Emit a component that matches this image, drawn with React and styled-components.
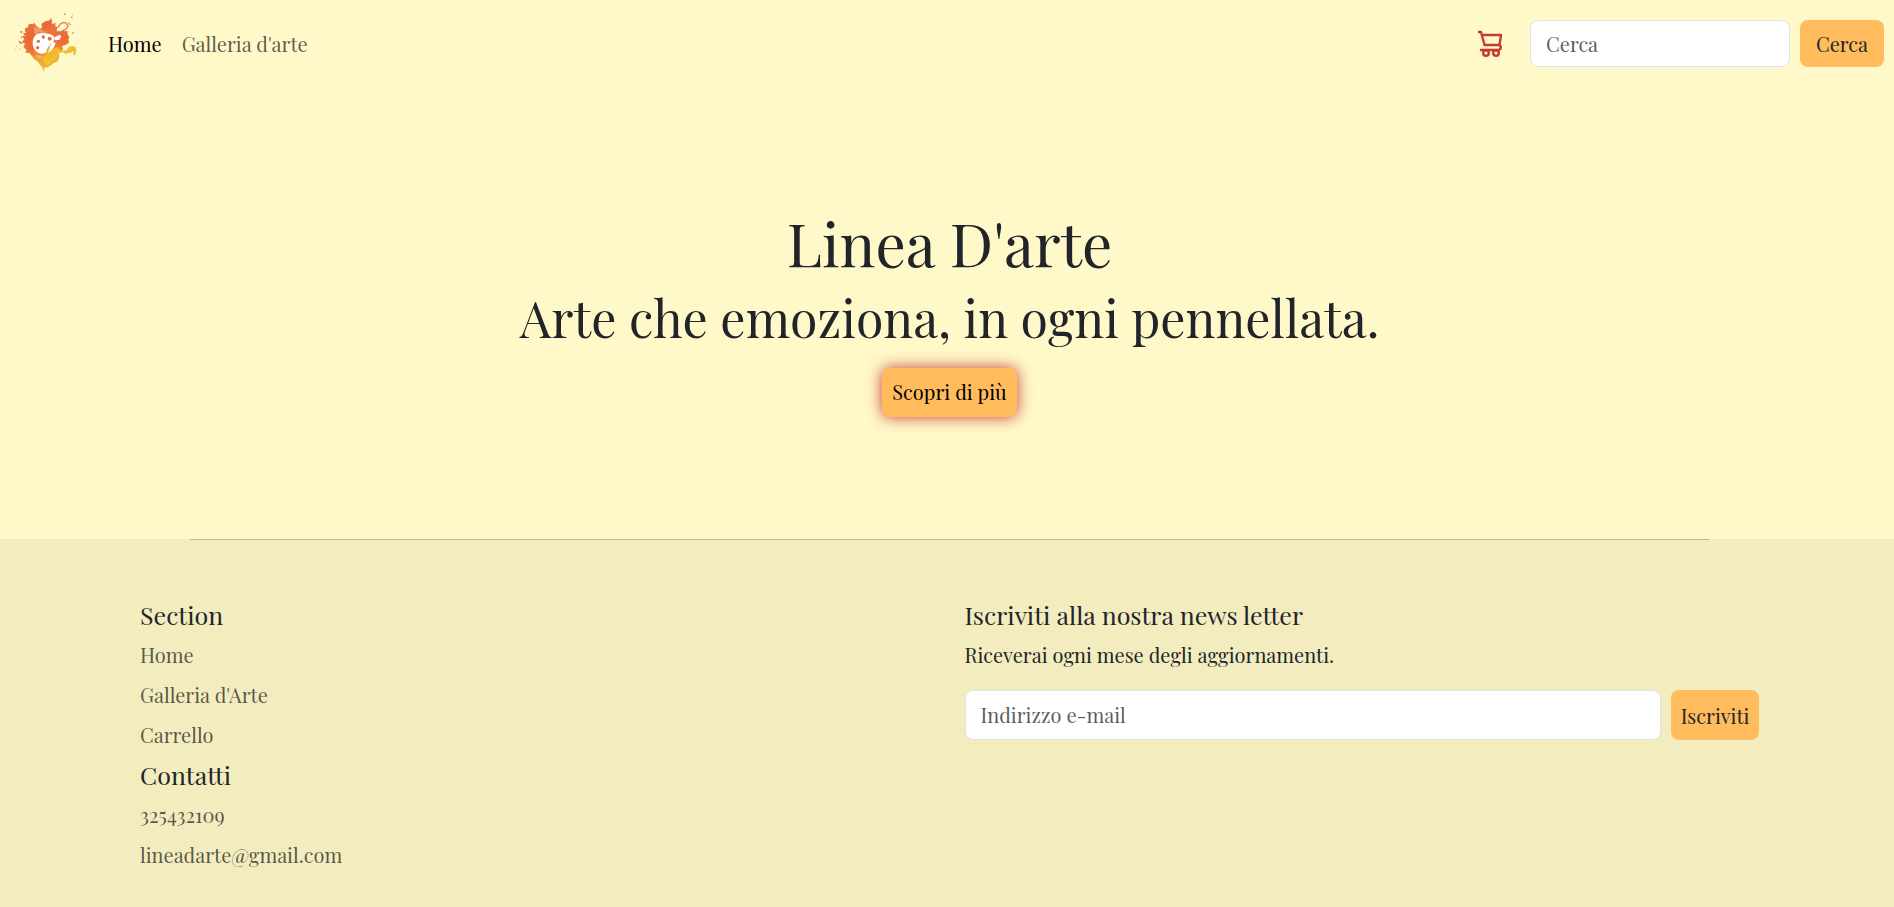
import React from "react";
import styled, { createGlobalStyle } from "styled-components";

const GlobalStyle = createGlobalStyle`
  *, *::before, *::after { box-sizing: border-box; }
  body {
    margin: 0;
    background: #fff8c9;
    color: #212529;
    font-family: "Playfair Display", "Liberation Serif", serif;
    font-size: 20px;
    line-height: 30px;
  }
`;

const Page = styled.div`
  min-height: 100vh;
  display: flex;
  flex-direction: column;
`;

const Navbar = styled.header`
  display: flex;
  align-items: center;
  padding: 10px 10px 10px 12px;
`;

const Brand = styled.a`
  display: block;
  width: 66px;
  height: 66px;
  margin-right: 30px;
`;

const Logo = styled.svg`
  display: block;
  width: 66px;
  height: 66px;
`;

const NavLinks = styled.nav`
  display: flex;
  gap: 20px;
  padding-top: 2px;
  margin-right: auto;
`;

const TextLink = styled.a`
  color: ${(p) => (p.$active ? "#000" : "rgba(0, 0, 0, 0.65)")};
  text-decoration: none;
`;

const CartLink = styled.a`
  display: block;
  padding-top: 2px;
  margin-right: 28px;
  line-height: 0;
`;

const Form = styled.form`
  display: flex;
  gap: 10px;
  height: ${(p) => p.$height};
`;

const Field = styled.input`
  min-width: 0;
  width: ${(p) => p.$width || "auto"};
  flex: ${(p) => (p.$width ? "none" : "1")};
  padding: ${(p) => (p.$width ? "2px 15px 0" : "0 15px")};
  border: 1px solid #dee2e6;
  border-radius: 8px;
  background: #fff;
  color: #212529;
  font: inherit;
  &::placeholder {
    color: rgba(33, 37, 41, 0.75);
    opacity: 1;
  }
`;

const Button = styled.button`
  width: ${(p) => p.$width};
  padding: 1px 0 0;
  border: 0;
  border-radius: 8px;
  background: #ffbb5c;
  color: #212529;
  font: inherit;
  white-space: nowrap;
  cursor: pointer;
`;

const Hero = styled.main`
  display: flex;
  flex-direction: column;
  align-items: center;
  padding: 120px 0 122px 5px;
  text-align: center;
`;

const Title = styled.h1`
  margin: 0 0 10px;
  font-size: 60px;
  line-height: 72px;
  font-weight: 400;
`;

const Tagline = styled.p`
  margin: 0 0 20px;
  font-size: 50px;
  line-height: 60px;
`;

const HeroButton = styled.a`
  padding: 9px 10px 10px;
  border-radius: 8px;
  background: #ffbb5c;
  box-shadow: 0 0 15px #c63d2f;
  color: #000;
  text-decoration: none;
`;

const Footer = styled.footer`
  flex: 1;
  background: #f2ecbf;
`;

const Divider = styled.hr`
  height: 1px;
  margin: 0 185px 0 190px;
  border: 0;
  background: #c0b797;
`;

const FooterGrid = styled.div`
  display: grid;
  grid-template-columns: 1fr 1fr;
  gap: 30px;
  padding: 55px 135px 30px 140px;
`;

const FooterTitle = styled.h2`
  margin: 0;
  font-size: 25px;
  line-height: 40px;
  font-weight: 400;
`;

const LinkList = styled.ul`
  margin: 0;
  padding: 0;
  list-style: none;
  line-height: 40px;
`;

const Note = styled.p`
  margin: 0 0 15px;
  line-height: 40px;
`;

function BrandLogo() {
  return (
    <Logo viewBox="36 30 198 198" aria-hidden="true">
      <defs>
        <linearGradient id="splash" gradientUnits="userSpaceOnUse" x1="125" y1="60" x2="150" y2="205">
          <stop offset="0" stopColor="#ec6f3b" />
          <stop offset="0.55" stopColor="#ec7338" />
          <stop offset="0.72" stopColor="#ee9a32" />
          <stop offset="1" stopColor="#efbf32" />
        </linearGradient>
      </defs>
      <path
        fill="url(#splash)"
        d="M76 84L86 81L83 75L92 71L97 73L104 69L108 77L121 86L126 82L124 71L136 64L149 61L153 53L156 62L155 71L168 70L165 78L172 81L170 93L178 94L190 93L204 94L202 103L208 110L205 119L208 127L198 134L186 139L190 148L183 154L176 158L178 172L171 185L160 190L151 197L141 203L135 202L130 216L127 203L119 193L112 184L103 178L96 169L88 159L76 158L79 149L70 141L75 132L66 126L73 117L66 109L75 107L69 100L79 98L74 92Z"
      />
      <path fill="#ecc033" d="M176 149l12 3 12-1 6-11 12-2 9 4 2 10-4 14-5-1 0-13-7 6-9 1-6 4-8-6-16 2z" />
      <path fill="#e9572f" opacity="0.25" d="M78 99l20-12 8 17-8 22 1 26 14 18-17-4-9-14-8-16zM128 75l24-14 2 14-18 10zM178 100l24 2-2 24-20 6-8-12z" />
      <path fill="#ffe0b8" opacity="0.35" d="M101 82l15 1 18 12 9-2-6 6-20-2-12 10zM106 164l24 4-8 8-10-2z" />
      <path fill="#f5ca2a" opacity="0.7" d="M139 158l16-8 16-10 9 10-6 10-2 15-15 8-7 10-14 0-8-16z" />
      <path fill="#efb52e" opacity="0.6" d="M151 159l12 10-15 12-8-5z" />
      <path fill="#fff8c9" d="M173 90l5-8 9-5 10-2 6 4-7 7-12 6z" />
      <path fill="none" stroke="#ea7848" strokeWidth="4" strokeLinecap="round" d="M174 82l8-11 9-4 8 2 4 9M204 80l-7 8-12 5" />
      <path fill="#fff" d="M98 130c0-19 11-31 28-31 14 0 27 2 35 10 6 6 2 14-5 20-9 8-15 16-16 27-15 13-42 0-42-26z" />
      <path fill="#fff" d="M143 158c1-13 8-24 16-33l8 4c-4 15-13 25-24 29zM163 118l3-8 14-6 4 6-6 9-9 2z" />
      <path fill="#ecb32e" d="M138 160c-1-8 3-15 9-20l3 4-7 14z" />
      <g fill="#ea693b">
        <circle cx="130" cy="111" r="5" />
        <circle cx="149" cy="116" r="6" />
        <circle cx="115" cy="124" r="5" />
        <circle cx="113" cy="143" r="5" />
      </g>
      <g fill="#e77a4a">
        <path d="M193 39l4 2-1 4-4-1zM205 67l4 2 1 5-4 0zM217 42l3 2-2 3zM214 49l4 3-1 3-4-2zM211 72l3 1-2 4zM216 98l5-2 1 4-5 1zM60 94l6-1 2 5-7 0zM62 107l5 4-2 5zM55 122l6 2 7 5-5 4-5-5zM48 138l2-1 1 2-2 1zM59 146l3 0 0 3-3 0zM46 148l2 0 0 2-2 0z" />
      </g>
    </Logo>
  );
}

function CartIcon() {
  return (
    <svg width="24" height="28" viewBox="0 0 24 28" fill="none" stroke="#c63d2f" strokeWidth="2.4" strokeLinejoin="round" aria-hidden="true">
      <path d="M0 2h3l3.5 13h15L23 5H4M21 15c3 1 2 5-1 5H2" />
      <circle cx="8" cy="23" r="2.8" />
      <circle cx="18" cy="23" r="2.8" />
    </svg>
  );
}

const stop = (e) => e.preventDefault();

export default function App() {
  return (
    <Page>
      <GlobalStyle />
      <Navbar>
        <Brand href="#" aria-label="Linea D'arte">
          <BrandLogo />
        </Brand>
        <NavLinks>
          <TextLink href="#" $active>Home</TextLink>
          <TextLink href="#galleria">Galleria d'arte</TextLink>
        </NavLinks>
        <CartLink href="#carrello" aria-label="Carrello">
          <CartIcon />
        </CartLink>
        <Form $height="47px" role="search" onSubmit={stop}>
          <Field $width="260px" type="search" placeholder="Cerca" aria-label="Cerca" />
          <Button $width="84px" type="submit">Cerca</Button>
        </Form>
      </Navbar>

      <Hero>
        <Title>Linea D'arte</Title>
        <Tagline>Arte che emoziona, in ogni pennellata.</Tagline>
        <HeroButton href="#galleria">Scopri di più</HeroButton>
      </Hero>

      <Footer>
        <Divider />
        <FooterGrid>
          <div>
            <FooterTitle>Section</FooterTitle>
            <LinkList>
              <li><TextLink href="#">Home</TextLink></li>
              <li><TextLink href="#galleria">Galleria d'Arte</TextLink></li>
              <li><TextLink href="#carrello">Carrello</TextLink></li>
            </LinkList>
            <FooterTitle>Contatti</FooterTitle>
            <LinkList>
              <li><TextLink href="tel:325432109">325432109</TextLink></li>
              <li><TextLink href="mailto:lineadarte@gmail.com">lineadarte@gmail.com</TextLink></li>
            </LinkList>
          </div>
          <div>
            <FooterTitle>Iscriviti alla nostra news letter</FooterTitle>
            <Note>Riceverai ogni mese degli aggiornamenti.</Note>
            <Form $height="50px" onSubmit={stop}>
              <Field type="email" placeholder="Indirizzo e-mail" aria-label="Indirizzo e-mail" />
              <Button $width="88px" type="submit">Iscriviti</Button>
            </Form>
          </div>
        </FooterGrid>
      </Footer>
    </Page>
  );
}
